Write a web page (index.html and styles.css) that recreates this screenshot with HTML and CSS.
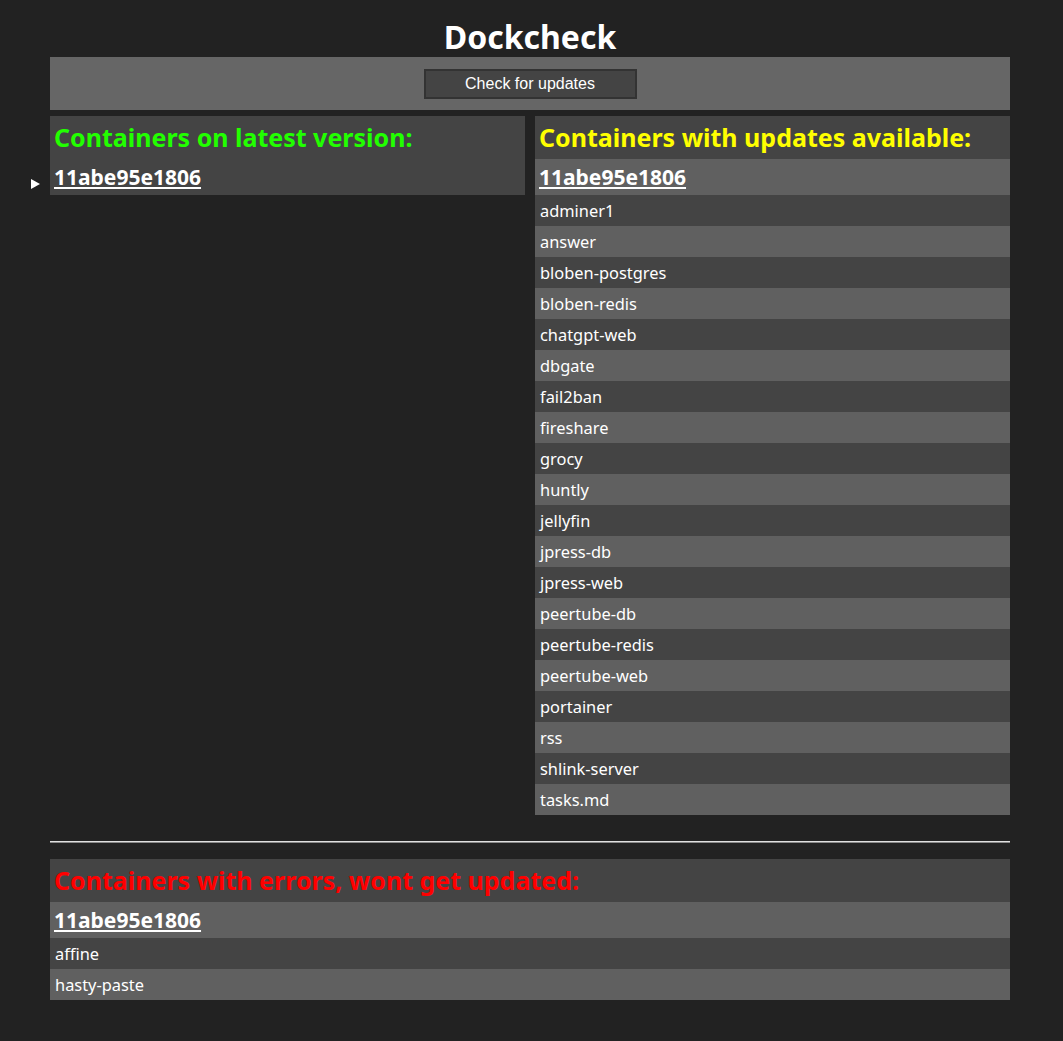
FILE: index.html
```html
<!DOCTYPE html>
<html lang="en">
<head>
<meta charset="utf-8">
<title>Dockcheck</title>
<link rel="stylesheet" href="styles.css">
</head>
<body>
<div class="page">
  <h1 class="title">Dockcheck</h1>
  <div class="toolbar">
    <button class="check-btn" type="button">Check for updates</button>
  </div>
  <div class="columns">
    <section class="panel">
      <h2 class="panel-head green">Containers on latest version:</h2>
      <details class="group" open>
        <summary class="group-sum dark">11abe95e1806</summary>
      </details>
    </section>
    <section class="panel">
      <h2 class="panel-head yellow">Containers with updates available:</h2>
      <div class="group">
        <div class="group-sum light">11abe95e1806</div>
        <ul class="list">
          <li>adminer1</li>
          <li>answer</li>
          <li>bloben-postgres</li>
          <li>bloben-redis</li>
          <li>chatgpt-web</li>
          <li>dbgate</li>
          <li>fail2ban</li>
          <li>fireshare</li>
          <li>grocy</li>
          <li>huntly</li>
          <li>jellyfin</li>
          <li>jpress-db</li>
          <li>jpress-web</li>
          <li>peertube-db</li>
          <li>peertube-redis</li>
          <li>peertube-web</li>
          <li>portainer</li>
          <li>rss</li>
          <li>shlink-server</li>
          <li>tasks.md</li>
        </ul>
      </div>
    </section>
  </div>
  <hr class="divider">
  <section class="panel">
    <h2 class="panel-head red">Containers with errors, wont get updated:</h2>
    <div class="group">
      <div class="group-sum light">11abe95e1806</div>
      <ul class="list">
        <li>affine</li>
        <li>hasty-paste</li>
      </ul>
    </div>
  </section>
</div>
</body>
</html>
```

FILE: styles.css
```css
html, body {
  margin: 0;
  padding: 0;
  background: #222222;
  color: #ffffff;
  font-family: "Noto Sans", "Open Sans", sans-serif;
}

.title {
  margin: 0;
  padding-top: 14px;
  box-sizing: border-box;
  text-align: center;
  font-size: 32px;
  font-weight: 700;
  height: 57px;
  line-height: 46px;
}

.page {
  width: 960px;
  margin-left: 50px;
}

.toolbar {
  background: #666666;
  height: 53px;
  display: flex;
  align-items: center;
  justify-content: center;
}

.check-btn {
  width: 213px;
  height: 30px;
  background: #444444;
  border: 2px solid #333333;
  color: #ffffff;
  font-family: "Liberation Sans", Arial, sans-serif;
  font-size: 16px;
  padding: 0;
}

.columns {
  display: flex;
  gap: 10px;
  margin-top: 6px;
  align-items: flex-start;
}

.columns .panel {
  flex: 1 1 0;
}

.panel-head {
  margin: 0;
  height: 43px;
  background: #444444;
  padding: 0 5px 0 4px;
  font-size: 25px;
  line-height: 43px;
  font-weight: 700;
}

.green { color: #22ff00; }
.yellow { color: #ffff00; }
.red { color: #ff0000; }

.group {
  margin: 0;
}

.group-sum {
  height: 36px;
  line-height: 37px;
  padding: 0 5px 0 4px;
  font-size: 21px;
  font-weight: 700;
  text-decoration: underline;
}

details > summary.group-sum {
  list-style: none;
  position: relative;
  cursor: default;
}

details > summary.group-sum::-webkit-details-marker {
  display: none;
}

details > summary.group-sum::before {
  content: "";
  position: absolute;
  left: -19px;
  top: 20px;
  border-left: 9px solid #ffffff;
  border-top: 5px solid transparent;
  border-bottom: 5px solid transparent;
}

.dark { background: #444444; }
.light { background: #606060; }

.list {
  list-style: none;
  margin: 0;
  padding: 0;
}

.list li {
  height: 31px;
  line-height: 32px;
  padding: 0 5px;
  font-size: 16.4px;
}

.list li:nth-child(odd) { background: #444444; }
.list li:nth-child(even) { background: #606060; }

.divider {
  margin: 26px 0 16px;
  border: 0;
  border-top: 1px solid #e0e0e0;
  border-bottom: 1px solid #8a8a8a;
  height: 0;
}
```
